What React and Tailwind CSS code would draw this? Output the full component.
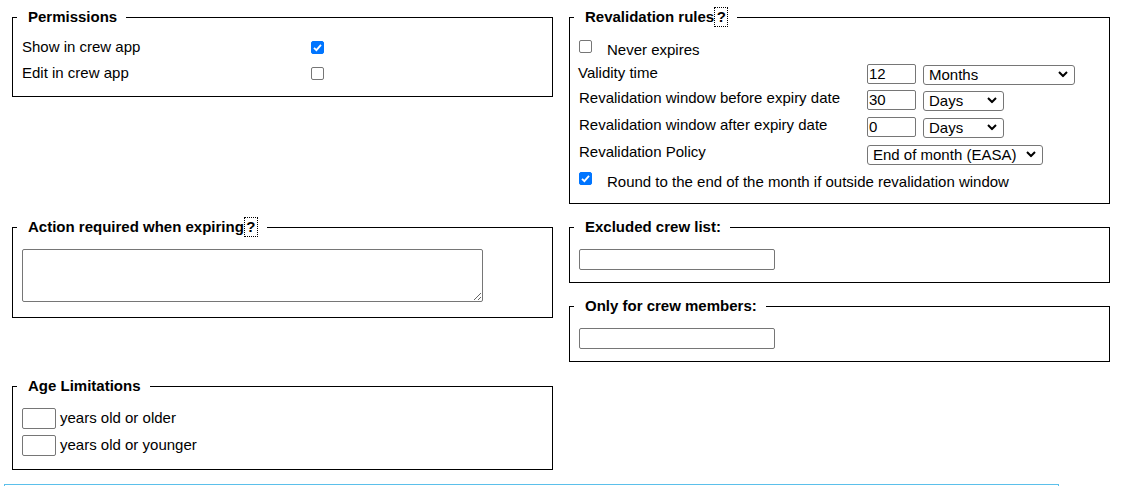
import React from "react";

const Help = () => (
  <span className="inline-block align-top h-[20px] w-[14px] border border-dotted border-black text-center leading-[18px]">?</span>
);

const Fieldset = ({ legend, help, className = "", children }) => (
  <fieldset className={`border border-black px-[9px] min-w-0 ${className}`}>
    <legend className="-ml-[5px] pl-[11px] pr-[9px] font-bold leading-[20px] h-[20px] whitespace-nowrap">
      {legend}
      {help && <Help />}
    </legend>
    {children}
  </fieldset>
);

const Chevron = () => (
  <svg
    className="absolute right-[7px] top-1/2 -translate-y-1/2 pointer-events-none"
    width="10"
    height="7"
    viewBox="0 0 10 7"
  >
    <polyline points="1,1.5 5,5.5 9,1.5" fill="none" stroke="#000" strokeWidth="2" />
  </svg>
);

const Select = ({ width, value, className = "" }) => (
  <div className={`relative h-[20px] ${width} ${className}`}>
    <select
      defaultValue={value}
      className="appearance-none w-full h-full border border-[#767676] rounded-[3px] pl-[5px] bg-white text-black leading-[18px]"
    >
      <option>{value}</option>
    </select>
    <Chevron />
  </div>
);

const TextInput = ({ value = "", className = "" }) => (
  <input
    type="text"
    defaultValue={value}
    className={`border border-[#767676] rounded-[2px] px-[1px] bg-white text-black ${className}`}
  />
);

const Check = ({ checked, className = "" }) => (
  <span className={`relative inline-block w-[13px] h-[13px] shrink-0 ${className}`}>
    <input
      type="checkbox"
      defaultChecked={checked}
      className={
        checked
          ? "appearance-none block w-[13px] h-[13px] rounded-[2px] bg-[#0075ff] border border-[#0075ff]"
          : "appearance-none block w-[13px] h-[13px] rounded-[2px] bg-white border border-[#767676]"
      }
    />
    {checked && (
      <svg className="absolute left-0 top-0 pointer-events-none" width="13" height="13" viewBox="0 0 13 13">
        <polyline points="3,6.8 5.4,9.2 10,3.8" fill="none" stroke="#fff" strokeWidth="1.8" />
      </svg>
    )}
  </span>
);

export default function App() {
  return (
    <div className="h-[486px] overflow-hidden bg-white text-black text-[15px] font-['Liberation_Sans',Arial,sans-serif] pt-[7px] pl-[12px]">
      {/* Row 1 */}
      <div className="flex items-start gap-[16px]">
        <Fieldset legend="Permissions" className="w-[541px] pt-[7px] pb-[10px]">
          <div className="flex items-center h-[26px]">
            <span className="w-[289px]">Show in crew app</span>
            <Check checked />
          </div>
          <div className="flex items-center h-[26px]">
            <span className="w-[289px]">Edit in crew app</span>
            <Check />
          </div>
        </Fieldset>

        <Fieldset legend="Revalidation rules" help className="w-[541px] pt-0 pb-[5px]">
          <div className="flex items-start h-[35px] pt-[12px]">
            <Check className="mt-[1px]" />
            <span className="ml-[15px]">Never expires</span>
          </div>
          <div className="flex items-start h-[26px]">
            <span className="w-[289px] -ml-px">Validity time</span>
            <TextInput value="12" className="w-[49px] h-[20px] mt-[2px]" />
            <Select width="w-[152px]" value="Months" className="ml-[7px] mt-[2px]" />
          </div>
          <div className="flex items-start h-[27px]">
            <span className="w-[288px] -mt-px">Revalidation window before expiry date</span>
            <TextInput value="30" className="w-[49px] h-[20px] mt-[2px]" />
            <Select width="w-[81px]" value="Days" className="ml-[7px] mt-[2px]" />
          </div>
          <div className="flex items-start h-[27px]">
            <span className="w-[288px] -mt-px">Revalidation window after expiry date</span>
            <TextInput value="0" className="w-[49px] h-[20px] mt-[2px]" />
            <Select width="w-[81px]" value="Days" className="ml-[7px] mt-[2px]" />
          </div>
          <div className="flex items-start h-[27px]">
            <span className="w-[288px] -mt-px">Revalidation Policy</span>
            <Select width="w-[176px]" value="End of month (EASA)" className="mt-[2px]" />
          </div>
          <div className="flex items-start h-[29px]">
            <Check checked className="mt-[3px]" />
            <span className="ml-[15px] mt-[2px]">Round to the end of the month if outside revalidation window</span>
          </div>
        </Fieldset>
      </div>

      {/* Row 2 */}
      <div className="flex items-start gap-[16px] mt-[13px]">
        <Fieldset legend="Action required when expiring" help className="w-[541px] pt-[12px] pb-[15px]">
          <textarea className="block w-[461px] h-[53px] border border-[#767676] rounded-[2px] bg-white p-[2px]" />
        </Fieldset>

        <div className="flex flex-col gap-[13px]">
          <Fieldset legend="Excluded crew list:" className="w-[541px] pt-[12px] pb-[12px]">
            <TextInput className="block w-[196px] h-[21px]" />
          </Fieldset>
          <Fieldset legend="Only for crew members:" className="w-[541px] pt-[12px] pb-[12px]">
            <TextInput className="block w-[196px] h-[21px]" />
          </Fieldset>
        </div>
      </div>

      {/* Row 3 */}
      <div className="flex items-start mt-[14px]">
        <Fieldset legend="Age Limitations" className="w-[541px] pt-[12px] pb-[13px]">
          <div className="flex items-center h-[21px]">
            <TextInput className="w-[34px] h-[21px]" />
            <span className="ml-[4px]">years old or older</span>
          </div>
          <div className="flex items-center h-[21px] mt-[6px]">
            <TextInput className="w-[34px] h-[21px]" />
            <span className="ml-[4px]">years old or younger</span>
          </div>
        </Fieldset>
      </div>

      <div className="-ml-[8px] mt-[14px] w-[1055px] h-[20px] border-t border-l border-r border-[#5bc0eb]" />
    </div>
  );
}
